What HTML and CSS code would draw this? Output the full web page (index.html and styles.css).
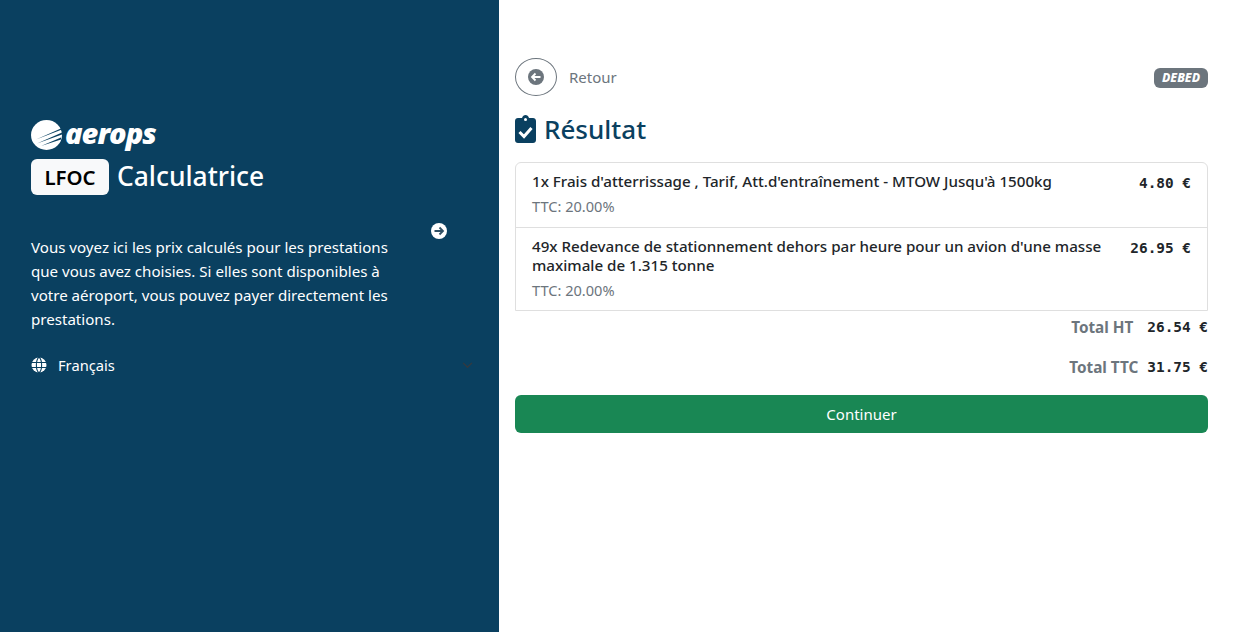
FILE: index.html
```html
<!DOCTYPE html>
<html lang="fr">
<head>
  <meta charset="UTF-8">
  <meta name="viewport" content="width=device-width, initial-scale=1.0">
  <title>Calculatrice</title>
  <link rel="stylesheet" href="styles.css">
</head>
<body>
  <div class="page">
    <div class="side">
      <div class="logo">
        <svg class="logo-mark" viewBox="0 0 31 30" width="31" height="30">
          <ellipse cx="15.500" cy="15" rx="15.500" ry="15" fill="#fff"/>
          <path d="M5 19.500L31 8V9.500ZM6 23.500L31 12.500V14.500ZM10 26L30 17.500V19.500Z" fill="#0a4060"/>
        </svg>
        <span class="logo-text">aerops</span>
      </div>
      <div class="title-row">
        <span class="code">LFOC</span>
        <span class="title">Calculatrice</span>
      </div>
      <p class="intro">Vous voyez ici les prix calculés pour les prestations que vous avez choisies. Si elles sont disponibles à votre aéroport, vous pouvez payer directement les prestations.</p>
      <div class="lang">
        <svg class="globe" viewBox="0 0 16 16" width="16" height="16">
          <circle cx="8" cy="8" r="7.5" fill="#fff"/>
          <path d="M0 5.5H16M0 10.5H16M8 0C4.5 3 4.5 13 8 16M8 0C11.500 3 11.500 13 8 16" stroke="#0a4060" stroke-width="1.100" fill="none"/>
        </svg>
        <span>Français</span>
        <svg class="chevron" viewBox="0 0 12 8" width="11" height="7">
          <path d="M1 1L6 6L11 1" stroke="#343a40" stroke-width="1.600" fill="none"/>
        </svg>
      </div>
      <svg class="next" viewBox="0 0 16 16" width="16" height="16">
        <circle cx="8" cy="8" r="8" fill="#fff"/>
        <path d="M3.500 8H11.500M8.500 4.500L12 8L8.500 11.500" stroke="#2f4f63" stroke-width="1.800" fill="none"/>
      </svg>
    </div>

    <div class="main">
      <div class="top">
        <button type="button" class="back">
          <svg viewBox="0 0 16 16" width="16" height="16">
            <circle cx="8" cy="8" r="8" fill="#6c757d"/>
            <path d="M12.500 8H4.500M7.500 4.500L4 8L7.500 11.500" stroke="#fff" stroke-width="1.800" fill="none"/>
          </svg>
        </button>
        <span class="back-label">Retour</span>
        <span class="badge">DEBED</span>
      </div>

      <h2 class="heading">
        <svg viewBox="0 0 21 28" width="21" height="28">
          <path d="M3 3H7C7.500 1 9 0 10.500 0S13.500 1 14 3H18C19.700 3 21 4.300 21 6V25C21 26.700 19.700 28 18 28H3C1.300 28 0 26.700 0 25V6C0 4.300 1.300 3 3 3Z" fill="#0a4060"/>
          <circle cx="10.500" cy="4.500" r="1.500" fill="#fff"/>
          <path d="M4.500 17L9 21.500L16.500 13" stroke="#fff" stroke-width="3" fill="none"/>
        </svg>
        Résultat
      </h2>

      <ul class="items">
        <li class="item">
          <div class="item-text">
            <div class="item-name">1x Frais d'atterrissage , Tarif, Att.d'entraînement - MTOW Jusqu'à 1500kg</div>
            <div class="item-tax">TTC: 20.00%</div>
          </div>
          <div class="price">4.80 €</div>
        </li>
        <li class="item">
          <div class="item-text">
            <div class="item-name">49x Redevance de stationnement dehors par heure pour un avion d'une masse maximale de 1.315 tonne</div>
            <div class="item-tax">TTC: 20.00%</div>
          </div>
          <div class="price">26.95 €</div>
        </li>
      </ul>

      <div class="total total-ht">
        <span class="total-label">Total HT</span>
        <span class="price">26.54 €</span>
      </div>
      <div class="total total-ttc">
        <span class="total-label">Total TTC</span>
        <span class="price">31.75 €</span>
      </div>

      <button type="button" class="continue">Continuer</button>
    </div>
  </div>
</body>
</html>
```

FILE: styles.css
```css
* {
  margin: 0;
  padding: 0;
  box-sizing: border-box;
  font-family: 'Noto Sans', sans-serif;
}

body {
  background: white;
  color: #212529;
  font-size: 15px;
}

.page {
  display: flex;
  height: 632px;
  overflow: hidden;
}

.side {
  position: relative;
  width: 499px;
  flex-shrink: 0;
  background: #0a4060;
  color: white;
  padding: 120px 25px 0 31px;
}

.logo {
  display: flex;
  align-items: center;
  height: 30px;
}

.logo-mark {
  display: block;
}

.logo-text {
  font-family: 'Open Sans', sans-serif;
  font-size: 29px;
  font-weight: 800;
  font-style: italic;
  letter-spacing: -1px;
  line-height: 30px;
  margin-left: 3px;
  margin-bottom: 4px;
}

.title-row {
  display: flex;
  align-items: center;
  margin-top: 9px;
}

.code {
  width: 78px;
  height: 36px;
  background: #f8f9fa;
  border-radius: 6px;
  color: black;
  font-size: 20.4px;
  font-weight: 600;
  line-height: 37px;
  text-align: center;
}

.title {
  font-size: 26.4px;
  font-weight: 500;
  line-height: 30px;
  margin-left: 8px;
  margin-bottom: 2px;
}

.intro {
  width: 365px;
  margin-top: 40px;
  font-size: 15.1px;
  line-height: 24px;
}

.lang {
  display: flex;
  align-items: center;
  margin-top: 22px;
  height: 24px;
  font-size: 14.7px;
}

.globe {
  margin-right: 11px;
}

.chevron {
  margin-left: auto;
  margin-right: 1px;
}

.next {
  position: absolute;
  left: 431px;
  top: 223px;
}

.main {
  flex: 1;
  padding: 58px 38px 0 16px;
}

.top {
  display: flex;
  align-items: center;
}

.back {
  width: 42px;
  height: 38px;
  border: 1px solid #6c757d;
  border-radius: 50%;
  background: none;
  display: flex;
  align-items: center;
  justify-content: center;
}

.back-label {
  color: #6c757d;
  margin-left: 12px;
}

.badge {
  margin-left: auto;
  margin-top: 2px;
  background: #6c757d;
  color: white;
  border-radius: 6px;
  font-size: 12.3px;
  font-weight: 800;
  font-style: italic;
  padding: 2px 8px;
  line-height: 16px;
}

.heading {
  display: flex;
  align-items: center;
  gap: 8px;
  color: #0a4060;
  font-size: 26px;
  font-weight: 500;
  line-height: 32px;
  margin-top: 17px;
}

.items {
  list-style: none;
  border: 1px solid #dfdfdf;
  border-radius: 6px 6px 0 0;
  margin-top: 17px;
}

.item {
  display: flex;
  justify-content: space-between;
  gap: 16px;
  padding: 9px 16px 8px;
}

.item:first-child {
  padding-bottom: 9px;
}

.item + .item {
  border-top: 1px solid #dfdfdf;
}

.item-name {
  font-size: 15.15px;
  font-weight: 500;
  line-height: 19px;
}

.item-tax {
  color: #6c757d;
  font-size: 14.6px;
  line-height: 24px;
  margin-top: 3px;
}

.price {
  font-family: 'DejaVu Sans Mono', monospace;
  font-size: 14.4px;
  font-weight: 700;
  white-space: pre;
  line-height: 19px;
  padding-top: 2px;
}

.total {
  display: flex;
  justify-content: flex-end;
  align-items: center;
  gap: 9px;
}

.total-ht {
  margin-top: 5px;
}

.total-ht .total-label {
  margin-right: 5px;
}

.total-ttc {
  margin-top: 19px;
}

.total-label {
  color: #6c757d;
  font-size: 15.3px;
  font-weight: 700;
}

.continue {
  display: block;
  width: 100%;
  height: 38px;
  margin-top: 18px;
  border: none;
  border-radius: 6px;
  background: #198754;
  color: white;
  font-size: 15px;
}
```
